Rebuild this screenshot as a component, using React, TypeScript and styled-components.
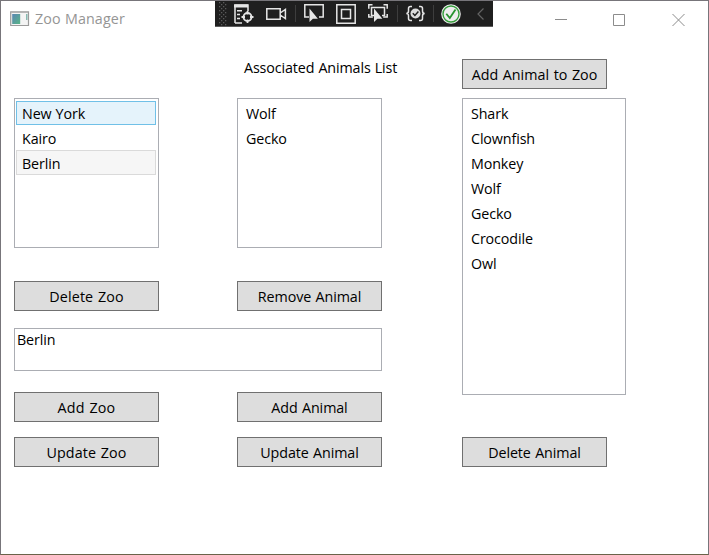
import React from "react";
import styled, { createGlobalStyle } from "styled-components";

const GlobalStyle = createGlobalStyle`
  *, *::before, *::after { box-sizing: border-box; }
  body { margin: 0; overflow: hidden; }
`;

const Window = styled.main`
  position: relative;
  width: 709px;
  height: 555px;
  background: #fff;
  border: 1px solid #77757a;
  border-bottom-color: #6a6349;
  color: #000;
  font: 14.3px/20px "Open Sans", "Noto Sans", sans-serif;
  letter-spacing: -0.12px;
  word-spacing: 0.5px;
`;

const TitleBar = styled.header`
  display: flex;
  align-items: center;
  height: 36px;
  padding: 0 24px 0 9px;
`;

const AppIcon = styled.svg`
  width: 20px;
  height: 16px;
  margin-right: 5px;
`;

const Title = styled.h1`
  flex: 1;
  margin: 0;
  font: inherit;
  color: #959595;
  letter-spacing: 0.1px;
`;

const Controls = styled.div`
  display: flex;
  gap: 46px;
`;

const ControlButton = styled.button`
  width: 12.5px;
  height: 13px;
  padding: 0;
  border: 0;
  background: none;
  svg { display: block; fill: none; stroke: #8c8c8c; overflow: visible; }
`;

const DebugBar = styled.div`
  position: absolute;
  top: 0;
  left: 214px;
  display: flex;
  align-items: flex-start;
  width: 278px;
  height: 26px;
  padding: 3px 0 0 4px;
  background: #1f1f1f;
  border-bottom: 1px solid #5c5c5c;
`;

const ToolIcon = styled.svg<{ $before: number; $width?: number }>`
  flex: none;
  width: ${(p) => p.$width ?? 20}px;
  height: 20px;
  margin-left: ${(p) => p.$before}px;
  overflow: visible;
  fill: none;
  stroke: #e6e6e6;
  stroke-width: 1.5;
`;

const Divider = styled.span<{ $before: number }>`
  flex: none;
  width: 1px;
  height: 17px;
  margin: 1px 0 0 ${(p) => p.$before}px;
  background: #3d3d3d;
`;

const Content = styled.div`
  display: flex;
  gap: 80px;
  padding: 22px 0 0 13px;
`;

const LeftPane = styled.section`
  width: 368px;
`;

const RightPane = styled.section`
  width: 164px;
`;

const Pair = styled.div<{ $gap?: number }>`
  display: grid;
  grid-template-columns: 145px 145px;
  column-gap: 78px;
  margin-bottom: ${(p) => p.$gap ?? 0}px;
`;

const Caption = styled.div`
  grid-column: 2;
  height: 39px;
  padding: 0 0 0 7px;
  line-height: 17px;
  white-space: nowrap;
`;

const List = styled.ul<{ $height: number; $inset?: number }>`
  height: ${(p) => p.$height}px;
  margin: 0;
  padding: 2px 2px 0 1px;
  border: 1px solid #abadb3;
  background: #fff;
  list-style: none;
  text-indent: ${(p) => p.$inset ?? 6}px;
`;

const Item = styled.li<{ $state?: "hover" | "inactive" }>`
  height: 25px;
  border: 1px solid transparent;
  line-height: 23px;
  ${(p) =>
    p.$state === "hover" &&
    "height: 24px; border-color: #70c0e7; background: #e5f3fb; & + li { line-height: 25px; }"}
  ${(p) =>
    p.$state === "inactive" &&
    "border-color: #dadada; background: #f6f6f6; line-height: 25px;"}
`;

const PushButton = styled.button<{ $gap?: number; $tracking?: number }>`
  display: block;
  width: 145px;
  height: 30px;
  margin: 0 0 ${(p) => p.$gap ?? 0}px;
  padding: 1px 0 0;
  border: 1px solid #707070;
  background: #ddd;
  color: #000;
  font: inherit;
  letter-spacing: ${(p) => p.$tracking ?? -0.1}px;
  word-spacing: 0.8px;
  line-height: 28px;
  white-space: nowrap;
`;

const NameInput = styled.input`
  display: block;
  width: 368px;
  height: 43px;
  margin-bottom: 21px;
  padding: 0 2px 21px;
  border: 1px solid #abadb3;
  outline: 0;
  font: inherit;
  letter-spacing: inherit;
`;

const zoos: { name: string; state?: "hover" | "inactive" }[] = [
  { name: "New York", state: "hover" },
  { name: "Kairo" },
  { name: "Berlin", state: "inactive" },
];
const zooAnimals = ["Wolf", "Gecko"];
const animals = ["Shark", "Clownfish", "Monkey", "Wolf", "Gecko", "Crocodile", "Owl"];

const cursorPath = "M7 5.5V19l3.4-3.2h5z";
const gripDots = Array.from({ length: 24 }, (_, i) => ({
  x: (i % 2) * 4 + (Math.floor(i / 2) % 2) * 2,
  y: Math.floor(i / 2) * 2 - 2,
}));

function DebugToolbar() {
  return (
    <DebugBar>
      <ToolIcon $before={0} $width={7}>
        {gripDots.map((d, i) => (
          <rect key={i} x={d.x} y={d.y} width="1.3" height="1.3" fill="#5a5a5a" stroke="none" />
        ))}
      </ToolIcon>
      <ToolIcon $before={8}>
        <path d="M1 19V1h13v6M1 19h7" />
        <path d="M0 2h14" strokeWidth="3" />
        <path d="M3 6.7h5M3 10.5h3M3 14.5h3" />
        <circle cx="13.5" cy="13" r="4" strokeWidth="1.8" />
        <path d="M13.5 7v3.5M13.5 15.5V19M7.5 13H11M16 13h3.5" strokeWidth="1.8" />
      </ToolIcon>
      <ToolIcon $before={12} $width={21}>
        <path d="M.8 4.8h13.4v10.4H.8zM14.2 9l5.2-3.5v9L14.2 11" />
      </ToolIcon>
      <Divider $before={8} />
      <ToolIcon $before={8}>
        <path d="M5 13H.8V.8h18.4V13H15" />
        <path d={cursorPath} transform="translate(-1.5 -1)" fill="#e6e6e6" stroke="none" />
      </ToolIcon>
      <ToolIcon $before={12}>
        <path d="M.8.8h18.4v18.4H.8zM5.5 5.5h9v9h-9z" />
      </ToolIcon>
      <ToolIcon $before={12}>
        <path d="M4.5.8H.8v4M15.5.8h3.7v4M.8 10v3h4M19.2 10v3h-4" />
        <path d="M6 11.5H3.5v-8h13v8H14" />
        <path d={cursorPath} transform="translate(-1 -1)" fill="#e6e6e6" stroke="none" />
      </ToolIcon>
      <Divider $before={9} />
      <ToolIcon $before={8}>
        <path d="M6 2.5H4.5q-2 0-2 2V7q0 2.5-2.2 2.5 2.2 0 2.2 2.5v2.500q0 2 2 2H6M13 2.500h1.500q2 0 2 2V7q0 2.500 2.200 2.500-2.200 0-2.200 2.500v2.500q0 2-2 2H13" />
        <circle cx="9.5" cy="9.5" r="5" fill="#dcdcdc" stroke="none" />
        <path d="M6.800 9.300l2.100 2.200 3.500-4" stroke="#1f1f1f" />
      </ToolIcon>
      <Divider $before={7} />
      <ToolIcon $before={7}>
        <circle cx="10" cy="10" r="9.8" fill="#eee" stroke="none" />
        <circle cx="10" cy="10" r="8" stroke="#369d3c" strokeWidth="1.4" />
        <path d="M5.3 9.8l3.5 4.3 5.7-8.7" stroke="#28932f" strokeWidth="1.8" />
      </ToolIcon>
      <ToolIcon $before={16} $width={7}>
        <path d="M6.5 4.5L1 10l5.5 5.5" stroke="#646464" strokeWidth="1.2" />
      </ToolIcon>
    </DebugBar>
  );
}

export default function App() {
  return (
    <>
      <GlobalStyle />
      <Window>
        <TitleBar>
          <AppIcon viewBox="0 0 20 16">
            <defs>
              <linearGradient id="pane" x2="1" y2="1">
                <stop offset="0" stopColor="#5b86b4" />
                <stop offset="1" stopColor="#58b586" />
              </linearGradient>
            </defs>
            <path d="M.7.8h17.8v13.700H.7z" fill="#f4f4f4" stroke="#9b9b9b" strokeWidth="1.2" />
            <path d="M1 1.500h17" stroke="#b5b5b5" />
            <path d="M2.200 3h8v10h-8z" fill="url(#pane)" />
            <path d="M16.800 3v6" stroke="#6caaa0" strokeWidth="1.2" />
          </AppIcon>
          <Title>Zoo Manager</Title>
          <Controls>
            <ControlButton aria-label="Minimize">
              <svg width="12" height="13"><path d="M0 6.500h12" /></svg>
            </ControlButton>
            <ControlButton aria-label="Maximize">
              <svg width="12" height="13"><path d="M.5 1.500h11v11H.5z" /></svg>
            </ControlButton>
            <ControlButton aria-label="Close">
              <svg width="12" height="13"><path d="M.5 1l12 12M12.500 1l-12 12" /></svg>
            </ControlButton>
          </Controls>
        </TitleBar>
        <DebugToolbar />
        <Content>
          <LeftPane>
            <Pair>
              <Caption>Associated Animals List</Caption>
            </Pair>
            <Pair $gap={33}>
              <List $height={150} $inset={5}>
                {zoos.map((z) => <Item key={z.name} $state={z.state}>{z.name}</Item>)}
              </List>
              <List $height={150}>
                {zooAnimals.map((a) => <Item key={a}>{a}</Item>)}
              </List>
            </Pair>
            <Pair $gap={17}>
              <PushButton $tracking={0.12}>Delete Zoo</PushButton>
              <PushButton>Remove Animal</PushButton>
            </Pair>
            <NameInput defaultValue="Berlin" />
            <Pair $gap={15}>
              <PushButton $tracking={0.2}>Add Zoo</PushButton>
              <PushButton>Add Animal</PushButton>
            </Pair>
            <Pair>
              <PushButton $tracking={0.12}>Update Zoo</PushButton>
              <PushButton>Update Animal</PushButton>
            </Pair>
          </LeftPane>
          <RightPane>
            <PushButton $gap={9} $tracking={0.02}>Add Animal to Zoo</PushButton>
            <List $height={297}>
              {animals.map((a) => <Item key={a}>{a}</Item>)}
            </List>
            <DeleteRow>
              <PushButton>Delete Animal</PushButton>
            </DeleteRow>
          </RightPane>
        </Content>
      </Window>
    </>
  );
}

const DeleteRow = styled.div`
  padding-top: 42px;
`;
